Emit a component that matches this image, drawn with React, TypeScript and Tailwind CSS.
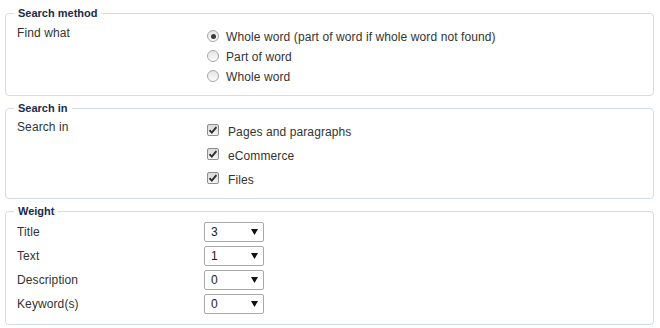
import React from "react";

type SectionProps = {
  title: string;
  className?: string;
  children: React.ReactNode;
};

function Section({ title, className, children }: SectionProps) {
  return (
    <fieldset
      className={
        "border border-[#d4dde6] rounded-[4px] pl-[11px] pr-[11px] " +
        (className ?? "")
      }
    >
      <legend className="-ml-[3px] px-[4px] text-[11px] leading-[16px] font-bold tracking-normal text-[#1a2b4c]">
        {title}
      </legend>
      {children}
    </fieldset>
  );
}

function Radio({ checked }: { checked?: boolean }) {
  return (
    <span className="ml-[3px] mr-[7px] mb-[2px] w-[12px] h-[12px] rounded-full border border-[#a7a7a7] bg-gradient-to-b from-[#e4e4e4] to-[#fbfbfb] flex items-center justify-center shrink-0">
      {checked && (
        <span className="w-[5px] h-[5px] rounded-full bg-[#3a3a3a]" />
      )}
    </span>
  );
}

function Checkbox() {
  return (
    <span className="ml-[3px] mr-[9px] mb-[4px] w-[12px] h-[12px] rounded-[2px] border border-[#8e8e8e] bg-gradient-to-b from-[#d9d9d9] to-[#f6f6f6] flex items-center justify-center shrink-0">
      <svg width="10" height="10" viewBox="0 0 10 10">
        <path
          d="M1.5 5.2 L3.8 7.6 L8.4 2.2"
          fill="none"
          stroke="#2e2e2e"
          strokeWidth="1.9"
        />
      </svg>
    </span>
  );
}

function Select({ value }: { value: string }) {
  return (
    <div className="w-[60px] h-[20px] border border-[#a9a9a9] rounded-[2px] bg-white flex items-center justify-between pl-[6px] pr-[5px] text-[#222]">
      <span>{value}</span>
      <svg width="7" height="6" viewBox="0 0 7 6">
        <polygon points="0,0 7,0 3.5,6" fill="#111" />
      </svg>
    </div>
  );
}

export default function App() {
  const methods = [
    { label: "Whole word (part of word if whole word not found)", checked: true },
    { label: "Part of word" },
    { label: "Whole word" },
  ];
  const places = ["Pages and paragraphs", "eCommerce", "Files"];
  const weights = [
    { label: "Title", value: "3" },
    { label: "Text", value: "1" },
    { label: "Description", value: "0" },
    { label: "Keyword(s)", value: "0" },
  ];

  return (
    <div className="w-[660px] h-[328px] bg-white pl-[5px] pr-[6px] pt-[5px] flex flex-col gap-[4px] font-['Liberation_Sans',Arial,sans-serif] text-[12px] leading-[14px] tracking-[0.1px] text-[#333]">
      {/* search method */}
      <Section title="Search method" className="pt-[5px] pb-[8px]">
        <div className="flex">
          <div className="w-[187px]">Find what</div>
          <div className="flex flex-col pt-[1px]">
            {methods.map((m) => (
              <div key={m.label} className="h-[20px] flex items-center">
                <Radio checked={m.checked} />
                <span>{m.label}</span>
              </div>
            ))}
          </div>
        </div>
      </Section>

      {/* search in */}
      <Section title="Search in" className="pt-[4px] pb-[6px]">
        <div className="flex">
          <div className="w-[187px]">Search in</div>
          <div className="flex flex-col">
            {places.map((p) => (
              <div key={p} className="h-[24px] flex items-center">
                <Checkbox />
                <span>{p}</span>
              </div>
            ))}
          </div>
        </div>
      </Section>

      {/* weight */}
      <Section title="Weight" className="pt-[3px] pb-[10px]">
        <div className="flex flex-col gap-[4px]">
          {weights.map((w) => (
            <div key={w.label} className="flex items-center h-[20px]">
              <div className="w-[187px]">{w.label}</div>
              <Select value={w.value} />
            </div>
          ))}
        </div>
      </Section>
    </div>
  );
}
